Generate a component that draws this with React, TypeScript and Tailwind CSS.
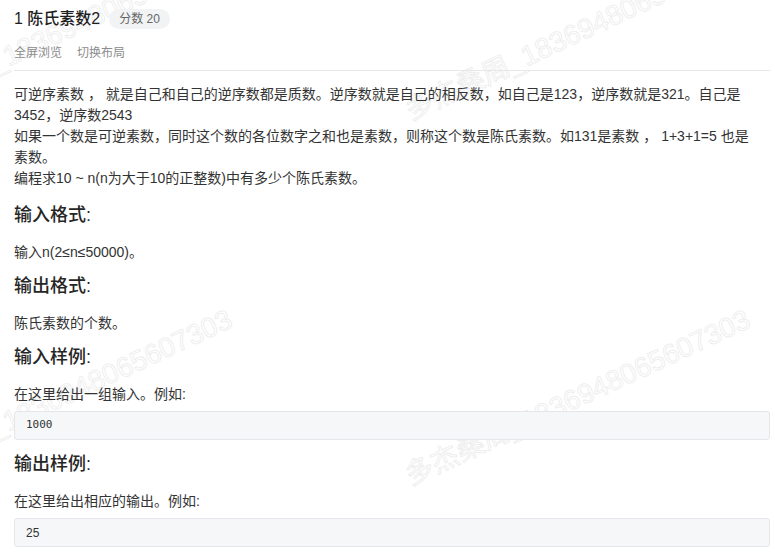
import React from "react";

const FONT = '"Liberation Sans", "Noto Sans CJK SC", sans-serif';

function Watermark({ left, top }: { left: number; top: number }) {
  return (
    <div
      aria-hidden="true"
      className="pointer-events-none absolute whitespace-nowrap text-[28px] leading-none text-transparent [-webkit-text-stroke:0.8px_#ececec] origin-bottom-left -rotate-[25deg] select-none"
      style={{ left, top, fontFamily: FONT }}
    >
      多杰桑周_1836948065607303
    </div>
  );
}

function Heading({ children, className = "" }: { children: React.ReactNode; className?: string }) {
  return (
    <h3 className={`text-[18px] leading-[26px] font-medium text-[#262626] ${className}`}>{children}</h3>
  );
}

function Para({ children, className = "" }: { children: React.ReactNode; className?: string }) {
  return <p className={`text-[14px] leading-[21px] text-[#333333] ${className}`}>{children}</p>;
}

function CodeBox({ children, mono = true }: { children: React.ReactNode; mono?: boolean }) {
  return (
    <div className="h-[29px] rounded-[3px] border border-[#e4e6ea] bg-[#f6f7f9] pl-[11px] flex items-center">
      <span
        className={mono ? "text-[11px] text-[#333]" : "text-[12px] text-[#333]"}
        style={{ fontFamily: mono ? '"DejaVu Sans Mono", monospace' : FONT }}
      >
        {children}
      </span>
    </div>
  );
}

export default function App() {
  return (
    <div
      className="relative w-[775px] h-[554px] overflow-hidden bg-white"
      style={{ fontFamily: FONT }}
    >
      <Watermark left={413} top={462} />
      <Watermark left={413} top={97} />
      <Watermark left={-105} top={462} />
      <Watermark left={-105} top={97} />

      <div className="relative pl-[14px] pr-[5px] pt-[9px]">
        <div className="flex items-center h-[20px]">
          <span className="text-[16px] leading-[20px] font-medium text-[#1f1f1f]">1 陈氏素数2</span>
          <span className="ml-[9px] h-[20px] px-[10px] rounded-full bg-[#f2f3f5] text-[12px] leading-[20px] text-[#666]">
            分数 20
          </span>
        </div>
        <div className="mt-[14px] flex gap-[15px] text-[12px] leading-[20px] text-[#8c8c8c]">
          <span>全屏浏览</span>
          <span>切换布局</span>
        </div>
        <div className="mt-[7px] border-t border-[#e8e8e8]" />

        <Para className="mt-[13px]">
          可逆序素数 ， 就是自己和自己的逆序数都是质数。逆序数就是自己的相反数，如自己是123，逆序数就是321。自己是
          <br />
          3452，逆序数2543
          <br />
          如果一个数是可逆素数，同时这个数的各位数字之和也是素数，则称这个数是陈氏素数。如131是素数 ， 1+3+1=5 也是
          <br />
          素数。
          <br />
          编程求10 ~ n(n为大于10的正整数)中有多少个陈氏素数。
        </Para>

        <Heading className="mt-[13px]">输入格式:</Heading>
        <Para className="mt-[14px]">输入n(2≤n≤50000)。</Para>

        <Heading className="mt-[10px]">输出格式:</Heading>
        <Para className="mt-[14px]">陈氏素数的个数。</Para>

        <Heading className="mt-[10px]">输入样例:</Heading>
        <Para className="mt-[14px]">在这里给出一组输入。例如:</Para>
        <div className="mt-[6px]">
          <CodeBox>1000</CodeBox>
        </div>

        <Heading className="mt-[11px]">输出样例:</Heading>
        <Para className="mt-[14px]">在这里给出相应的输出。例如:</Para>
        <div className="mt-[6px]">
          <CodeBox mono={false}>25</CodeBox>
        </div>
      </div>
    </div>
  );
}
